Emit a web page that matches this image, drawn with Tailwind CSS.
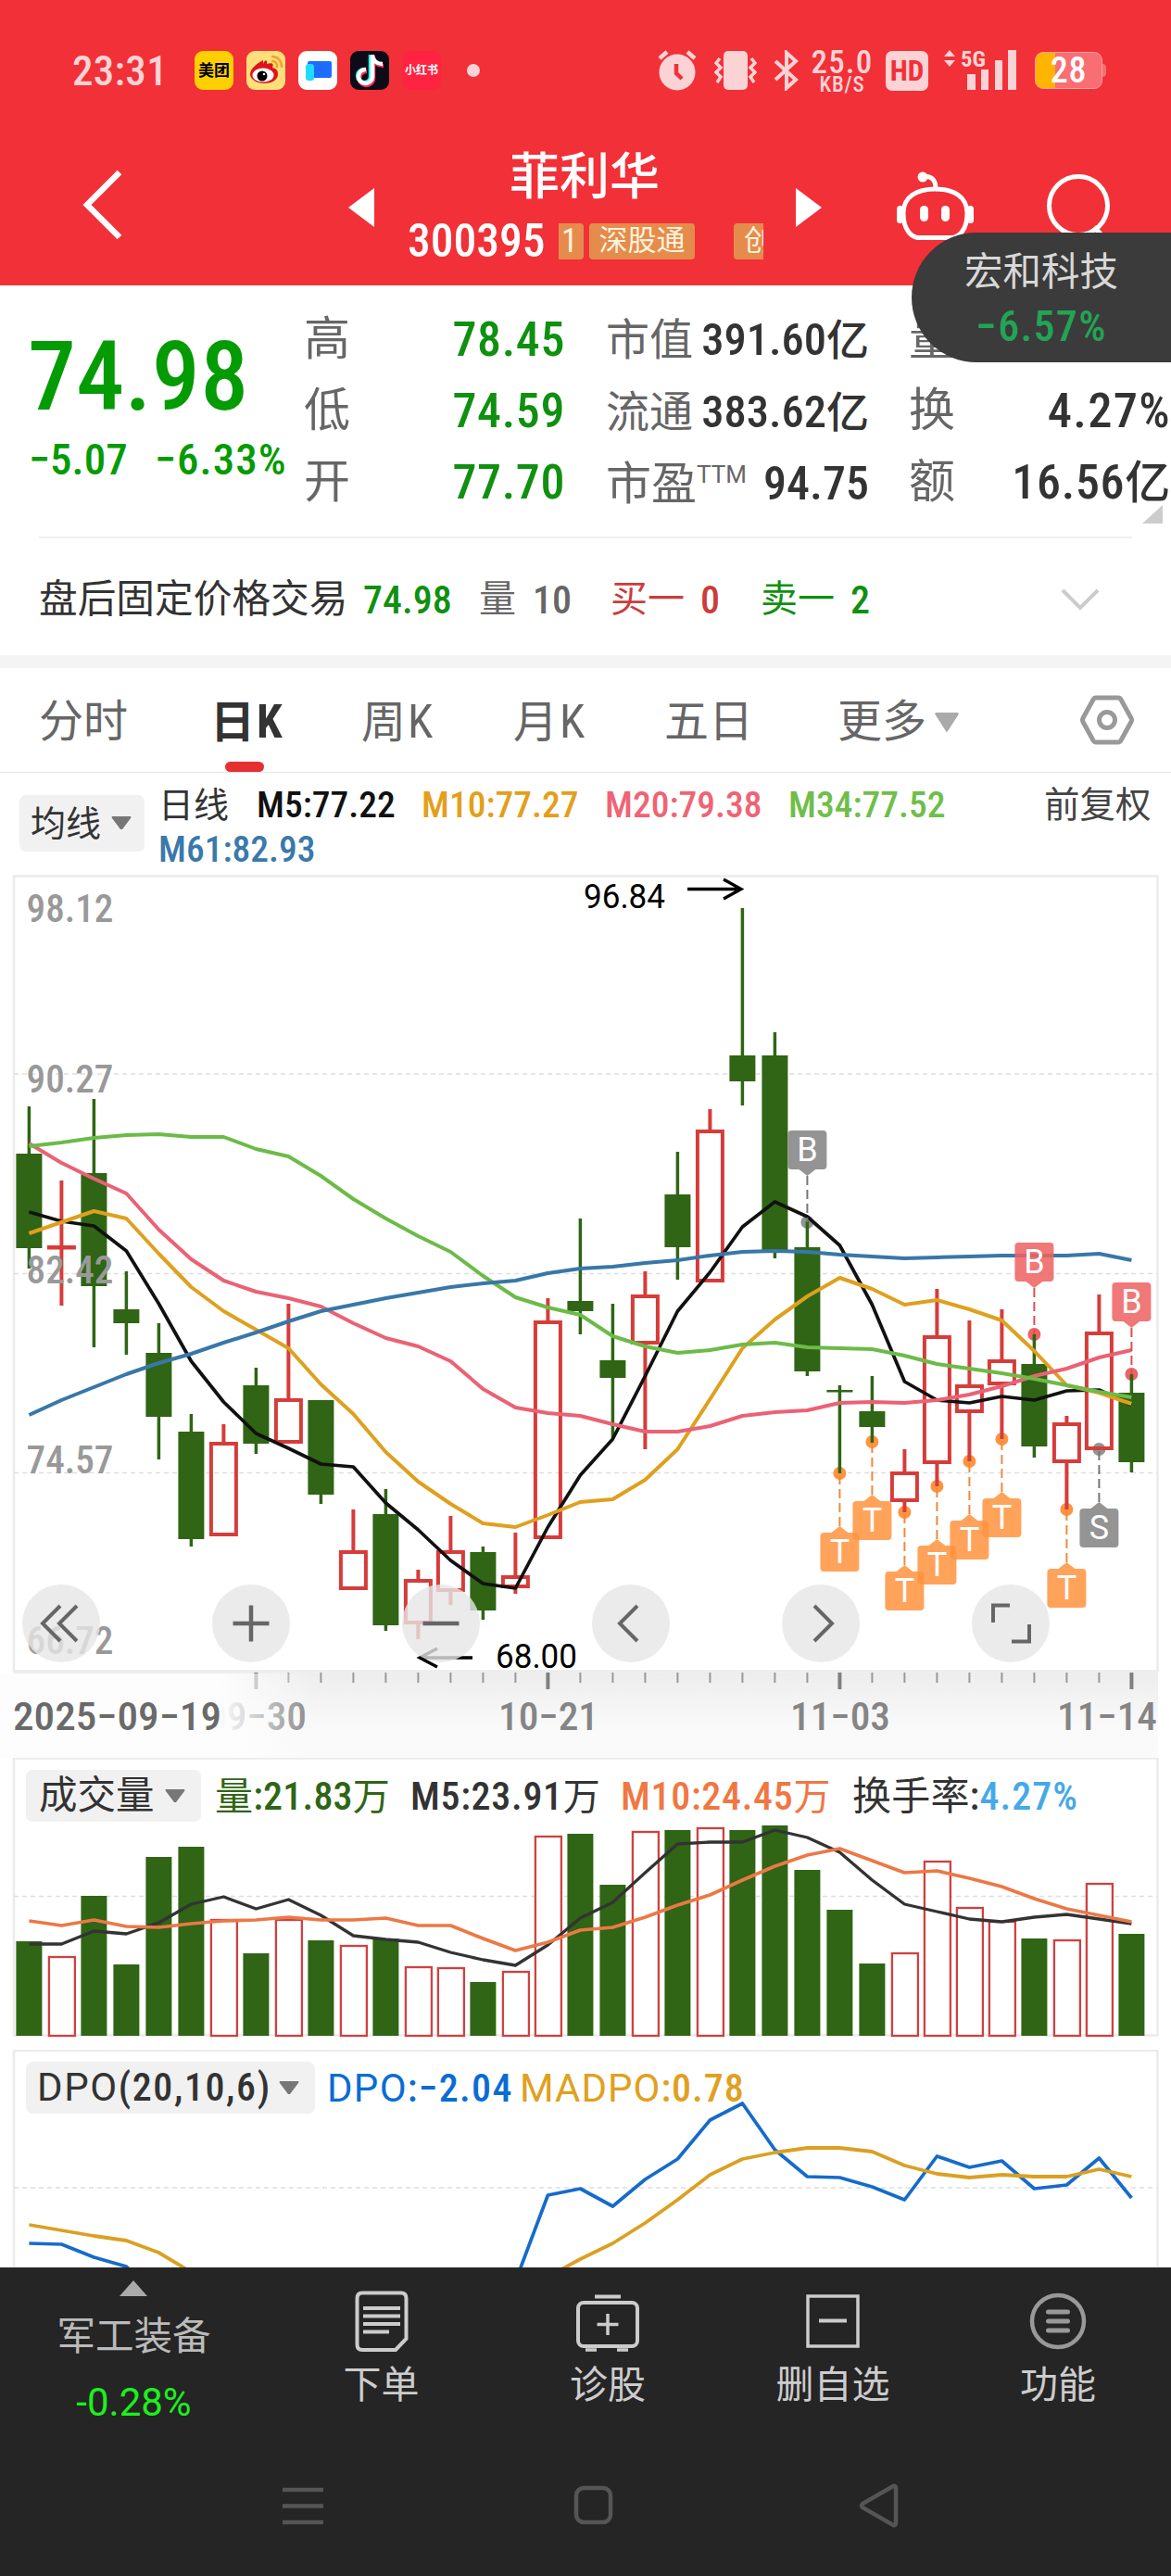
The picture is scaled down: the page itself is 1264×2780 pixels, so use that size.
<!DOCTYPE html>
<html lang="zh-CN">
<head>
<meta charset="utf-8">
<title>菲利华 300395</title>
<script src="https://cdn.jsdelivr.net/npm/@tailwindcss/browser@4"></script>
</head>
<body class="relative h-[2780px] w-[1264px] overflow-hidden bg-white font-['Roboto_Condensed','Roboto','Noto_Sans_CJK_SC',sans-serif] whitespace-nowrap text-[#333]">

<!-- header -->
<header class="h-[308px] bg-[#f13038] text-white">
  <div class="flex h-[152px] items-center">
    <div class="ml-[78px] w-[132px] text-[45px] leading-none font-medium tracking-[0.300px] text-[#fcd3d5]">23:31</div>
    <div class="flex gap-[14px]">
      <div class="flex size-[42px] items-center justify-center rounded-[9px] bg-[#ffd000] text-[17px] leading-none font-bold text-black">美团</div>
      <svg class="size-[42px]" viewBox="0 0 42 42"><rect width="42" height="42" rx="9" fill="#ffdf7a"/><path d="M18 14c2-6 5-4 4 0 6-2 8 0 6 4 5 1 6 4 6 7 0 7-8 10-15 10S4 31 4 25 12 13 18 10z" fill="#e1131a"/><ellipse cx="18" cy="26" rx="11.500" ry="7.500" fill="#fff"/><circle cx="17" cy="27" r="5.500" fill="#000"/><circle cx="19" cy="25" r="1.300" fill="#fff"/><path d="M28 11c3 0 5 2 5 6M28 6c6 0 10 5 10 11" fill="none" stroke="#f5a12d" stroke-width="2.500" stroke-linecap="round"/></svg>
      <svg class="size-[42px]" viewBox="0 0 42 42"><rect width="42" height="42" rx="9" fill="#fff"/><rect x="10" y="11" width="26" height="18" rx="2" fill="#1e6bff"/><rect x="8" y="14" width="9" height="18" rx="3" fill="#1fdcff"/></svg>
      <svg class="size-[42px]" viewBox="0 0 42 42"><rect width="42" height="42" rx="9" fill="#0d0b17"/><g fill="none" stroke-width="4.500"><path d="M23 4v24a7 7 0 1 1-7-8" stroke="#25f4ee" transform="translate(-1 0)"/><path d="M24 6v23a7.500 7.500 0 1 1-7-8M24 6c1 6 5 9 11 9" stroke="#fe2c55" transform="translate(1 1)"/><path d="M24 4v24a7.500 7.500 0 1 1-7-8M24 5c1 6 5 9 11 9" stroke="#fff"/></g></svg>
      <div class="flex size-[42px] items-center justify-center rounded-[9px] bg-[#ff2342] text-[12px] leading-none font-bold text-white">小红书</div>
    </div>
    <div class="ml-[28px] size-[14px] rounded-full bg-[#fcd3d5]"></div>
    <svg class="ml-[192px] h-[44px] w-[42px]" viewBox="0 0 42 44"><circle cx="21" cy="24" r="19.500" fill="#fcd3d5"/><path d="M2 9l8-7M40 9l-8-7" stroke="#fcd3d5" stroke-width="4.500"/><path d="M20 15v10l6 6" fill="none" stroke="#f13038" stroke-width="4.500"/></svg>
    <svg class="ml-[19px] h-[44px] w-[46px]" viewBox="0 0 46 44"><rect x="10" y="1" width="26" height="42" rx="5" fill="#fcd3d5"/><path d="M6 9L2 14l5 5-5 5 5 5-4 6M40 9l4 5-5 5 5 5-5 5 4 6" fill="none" stroke="#fcd3d5" stroke-width="3.500"/></svg>
    <svg class="ml-[18px] h-[44px] w-[28px]" viewBox="0 0 28 44"><path d="M2 12l22 20-10 9V3l10 9L2 32" fill="none" stroke="#fcd3d5" stroke-width="4"/></svg>
    <div class="ml-[11px] mt-[4px] flex w-[70px] flex-col items-center text-[#fcd3d5]">
      <div class="text-[35px] leading-[27px] font-medium tracking-[1.200px]">25.0</div>
      <div class="text-[23px] leading-[22px] font-medium tracking-[0.800px]">KB/S</div>
    </div>
    <div class="ml-[12px] flex h-[43px] w-[46px] items-center justify-center rounded-[7px] bg-[#fcd3d5] text-[31px] leading-none font-bold text-[#f13038]">HD</div>
    <svg class="ml-[16px] h-[44px] w-[80px]" viewBox="0 0 80 44"><g fill="#fcd3d5"><path d="M1 7l6-7 6 7zM1 11h12l-6 7z"/><rect x="26" y="26" width="9" height="17"/><rect x="41" y="21" width="8" height="22"/><rect x="56" y="11" width="8" height="32"/><rect x="70" y="0" width="9" height="43"/><text x="19" y="18" font-size="24" font-weight="700" textLength="27" lengthAdjust="spacingAndGlyphs">5G</text></g></svg>
    <div class="ml-[19px] flex items-center">
      <div class="flex h-[40px] w-[73px] items-center justify-center rounded-[9px] border border-[#ffa0a2] bg-linear-to-r from-[#ffb400] from-30% to-[#f86e73] to-30% text-[38px] leading-none font-medium tracking-[0.800px]">28</div>
      <div class="h-[14px] w-[4px] rounded-r bg-[#f86e73]"></div>
    </div>
  </div>
  <div class="flex h-[156px]">
    <svg class="mt-[28px] ml-[86px] h-[82px] w-[50px]" viewBox="0 0 50 82"><path d="M43 6L8 41l35 35" fill="none" stroke="#fff" stroke-width="6.500"/></svg>
    <svg class="mt-[51px] ml-[240px] h-[42px] w-[28px]" viewBox="0 0 28 42"><path d="M28 0v42L0 21z" fill="#fff"/></svg>
    <div class="ml-[36px] w-[384px]">
      <div class="mt-px -mb-px ml-[110px] text-[54px] leading-[78px] font-medium">菲利华</div>
      <div class="flex h-[60px] items-center">
        <div class="w-[163px] text-[49.500px] leading-[60px] font-medium">300395</div>
        <div class="flex h-[39px] w-[27px] items-center rounded-r-[4px] bg-[#e58c4c] text-[36px] text-[#fff3dc]"><span class="ml-[3px]">1</span></div>
        <div class="ml-[6px] flex h-[39px] w-[114px] items-center justify-center rounded-[4px] bg-[#e58c4c] text-[31px] text-[#fff3dc]">深股通</div>
        <div class="ml-[42px] flex h-[39px] w-[32px] items-center overflow-hidden rounded-l-[4px] bg-[#e58c4c] pl-[11px] text-[31px] text-[#fff3dc]">创</div>
      </div>
    </div>
    <svg class="mt-[51px] ml-[35px] h-[42px] w-[28px]" viewBox="0 0 28 42"><path d="M0 0v42L28 21z" fill="#fff"/></svg>
    <svg class="mt-[32px] ml-[80px] h-[78px] w-[84px]" viewBox="0 0 84 78"><g fill="none" stroke="#fff" stroke-width="5"><path d="M29 7c9-2 14 3 14 12"/><path d="M42.500 20C62 20 77 28 77 46S68 72.500 60 72.500H25C17 72.500 8 64 8 46S23 20 42.500 20z"/></g><rect x="1" y="38" width="7" height="19" rx="3.500" fill="#fff"/><rect x="77" y="38" width="7" height="19" rx="3.500" fill="#fff"/><circle cx="29" cy="7" r="5.500" fill="#fff"/><rect x="26" y="38" width="9" height="17" rx="4.500" fill="#fff"/><rect x="49" y="38" width="9" height="17" rx="4.500" fill="#fff"/></svg>
    <svg class="mt-[34px] ml-[76px] h-[80px] w-[76px]" viewBox="0 0 76 80"><path d="M54 59l16 17" stroke="#fff" stroke-width="5"/><circle cx="37" cy="36" r="31.500" fill="none" stroke="#fff" stroke-width="5"/></svg>
  </div>
</header>

<!-- quote summary -->
<section class="relative flex h-[271px] pt-[20px] pl-[31px]">
  <div class="w-[297px] font-medium text-[#049b04]">
    <div class="mt-[29px] -ml-px text-[104px] leading-[100px] tracking-[0.300px]">74.98</div>
    <div class="mt-[14px] flex text-[47px] leading-[50px]"><span class="w-[136px]">−5.07</span><span class="tracking-[1px]">−6.33%</span></div>
  </div>
  <div class="w-[282px] leading-[77px]">
    <div class="flex justify-between"><span class="text-[50px] text-[#666]">高</span><span class="text-[52px] font-medium tracking-[0.600px] text-[#109010]">78.45</span></div>
    <div class="flex justify-between"><span class="text-[50px] text-[#666]">低</span><span class="text-[52px] font-medium tracking-[0.600px] text-[#109010]">74.59</span></div>
    <div class="flex justify-between"><span class="text-[50px] text-[#666]">开</span><span class="text-[52px] font-medium tracking-[0.600px] text-[#109010]">77.70</span></div>
  </div>
  <div class="ml-[44px] w-[284px] leading-[77px]">
    <div class="flex justify-between"><span class="text-[47px] text-[#666]">市值</span><span class="text-[48.500px] font-medium">391.60<span class="text-[46px]">亿</span></span></div>
    <div class="flex justify-between"><span class="text-[47px] text-[#666]">流通</span><span class="text-[48.500px] font-medium">383.62<span class="text-[46px]">亿</span></span></div>
    <div class="flex justify-between"><span class="flex text-[49px] text-[#666]">市盈<span class="-mt-[10px] font-['Roboto'] text-[26px]">TTM</span></span><span class="text-[50px] font-medium">94.75</span></div>
  </div>
  <div class="ml-[43px] w-[283px] leading-[77px]">
    <div class="text-[50px] text-[#666]">量</div>
    <div class="flex justify-between"><span class="text-[50px] text-[#666]">换</span><span class="text-[52.500px] font-medium tracking-[1.300px]">4.27%</span></div>
    <div class="flex justify-between"><span class="text-[50px] text-[#666]">额</span><span class="text-[52px] font-medium tracking-[0.700px]">16.56<span class="text-[49px]">亿</span></span></div>
  </div>
  <svg class="absolute top-[237px] left-[1233px] h-[20px] w-[22px]" viewBox="0 0 22 20"><path d="M22 0v20H0z" fill="#ccc"/></svg>
</section>

<!-- after-hours trading -->
<section class="flex h-[128px] flex-col">
  <div class="mx-[42px] h-[2px] bg-[#eee]"></div>
  <div class="flex flex-1 items-center pt-[6px] pl-[42px] text-[42px]">
    <span class="w-[350px] text-[41.700px]">盘后固定价格交易</span>
    <span class="w-[125px] font-medium text-[#109010]">74.98</span>
    <span class="w-[58px] text-[40px] text-[#666]">量</span><span class="w-[84px] font-medium text-[#666]">10</span>
    <span class="w-[97px] text-[40px] text-[#cb3c3a]">买一</span><span class="w-[65px] font-medium text-[#cb3c3a]">0</span>
    <span class="w-[97px] text-[40px] text-[#109010]">卖一</span><span class="font-medium text-[#109010]">2</span>
    <svg class="ml-[205px] h-[26px] w-[44px]" viewBox="0 0 44 26"><path d="M3 3l19 19L41 3" fill="none" stroke="#ccc" stroke-width="4"/></svg>
  </div>
</section>
<div class="h-[14px] bg-[#f4f4f4]"></div>

<!-- period tabs -->
<nav class="flex h-[113px] items-center border-b border-[#e5e5e5] pt-[4px] pl-[42px] text-[48px] leading-[60px] text-[#666]">
  <span class="w-[185px]">分时</span>
  <span class="relative w-[163px] font-bold text-[#333]">日<span class="ml-[2px] text-[50px]">K</span><i class="absolute top-[73px] left-[16px] h-[11px] w-[42px] rounded-[6px] bg-[#e62f31]"></i></span>
  <span class="w-[164px]">周<span class="ml-[2px] text-[50px]">K</span></span>
  <span class="w-[163px]">月<span class="ml-[2px] text-[50px]">K</span></span>
  <span class="w-[187px]">五日</span>
  <span>更多</span>
  <svg class="ml-[9px] h-[21px] w-[26px]" viewBox="0 0 26 21"><path d="M2 0h22q3 0 1 3L14 20q-1 2-2 0L1 3Q-1 0 2 0z" fill="#aaa"/></svg>
  <svg class="ml-[131px] -mt-[4px] h-[54px] w-[58px]" viewBox="0 0 58 54"><path d="M17 3h24q2 0 3 2l11 20q1 2 0 4L44 49q-1 2-3 2H17q-2 0-3-2L3 29q-1-2 0-4L14 5q1-2 3-2z" fill="none" stroke="#999" stroke-width="5"/><circle cx="29" cy="27" r="8.500" fill="none" stroke="#999" stroke-width="5"/></svg>
</nav>

<!-- moving-average legend -->
<section class="flex h-[106px] pl-[21px]">
  <div class="mt-[24px] flex h-[61px] w-[135px] items-center rounded-[7px] bg-[#f1f1f1] pl-[12px] text-[38px] leading-none"><span>均线</span>
    <svg class="ml-[11px] h-[15px] w-[22px]" viewBox="0 0 22 15"><path d="M1 0h20q1 1 0 2L12 14h-2L1 2Q0 1 1 0z" fill="#777"/></svg></div>
  <div class="mt-[11px] ml-[15px] text-[39.500px] leading-[48px] font-medium">
    <div class="flex"><span class="w-[106px] text-[38px] font-normal">日线</span><span class="w-[178px] text-[#111]">M5:77.22</span><span class="w-[198px] text-[#e39f1c]">M10:77.27</span><span class="w-[198px] text-[#ee6475]">M20:79.38</span><span class="w-[276px] text-[#6fbe4a]">M34:77.52</span><span class="text-[38.500px] font-normal text-[#444]">前复权</span></div>
    <div class="text-[#3a79ab]">M61:82.93</div>
  </div>
</section>

<!-- candlestick chart with time axis -->
<section class="relative h-[957px]">
  <svg id="kline" class="block h-[957px] w-[1264px]" viewBox="0 940 1264 957"></svg>
  <div class="absolute top-[770px] left-[24px] flex gap-[121px]">
    <button class="size-[84px] rounded-full bg-[#e6e6e6]/80"><svg viewBox="0 0 84 84"><path d="M41 23L22 42l19 19M59 23L40 42l19 19" fill="none" stroke="#666" stroke-width="4"/></svg></button>
    <button class="size-[84px] rounded-full bg-[#e6e6e6]/80"><svg viewBox="0 0 84 84"><path d="M42 22.500v39M22.500 42h39" fill="none" stroke="#666" stroke-width="4.500"/></svg></button>
    <button class="size-[84px] rounded-full bg-[#e6e6e6]/80"><svg viewBox="0 0 84 84"><path d="M22.500 42h39" fill="none" stroke="#666" stroke-width="4.500"/></svg></button>
    <button class="size-[84px] rounded-full bg-[#e6e6e6]/80"><svg viewBox="0 0 84 84"><path d="M49 23L30 42l19 19" fill="none" stroke="#666" stroke-width="4"/></svg></button>
    <button class="size-[84px] rounded-full bg-[#e6e6e6]/80"><svg viewBox="0 0 84 84"><path d="M35 23l19 19-19 19" fill="none" stroke="#666" stroke-width="4"/></svg></button>
    <button class="size-[84px] rounded-full bg-[#e6e6e6]/80"><svg viewBox="0 0 84 84"><path d="M41 22.500H23V41M43 61.500h19V43" fill="none" stroke="#666" stroke-width="4"/></svg></button>
  </div>
</section>

<!-- volume -->
<section class="relative h-[315px]">
  <svg id="volume" class="absolute inset-0 h-[315px] w-[1264px]" viewBox="0 1897 1264 315"></svg>
  <div class="relative flex pt-[14px] pl-[28px] text-[42px] leading-[56px] font-medium tracking-[0.200px]">
    <div class="-mt-px flex h-[56px] w-[189px] items-center rounded-[7px] bg-[#f1f1f1] pl-[14px] text-[41.500px] font-normal tracking-normal">成交量<svg class="ml-[11px] h-[15px] w-[22px]" viewBox="0 0 22 15"><path d="M1 0h20q1 1 0 2L12 14h-2L1 2Q0 1 1 0z" fill="#777"/></svg></div>
    <span class="ml-[15px] w-[211px] text-[#2f6514]"><span class="text-[41px] font-normal">量</span>:21.83<span class="text-[40px] font-normal">万</span></span>
    <span class="w-[227px] tracking-[0.700px]">M5:23.91<span class="text-[40px] font-normal">万</span></span>
    <span class="w-[249px] tracking-[0.700px] text-[#f07742]">M10:24.45<span class="text-[40px] font-normal">万</span></span>
    <span><span class="ml-px text-[42px] font-normal">换手率</span>:<span class="tracking-[1px] text-[#45a9e8]">4.27%</span></span>
  </div>
</section>

<!-- DPO -->
<section class="relative h-[235px]">
  <svg id="dpo" class="absolute inset-0 h-[235px] w-[1264px]" viewBox="0 2212 1264 235"></svg>
  <div class="relative flex pt-[14px] pl-[28px] text-[42px] leading-[56px] font-medium">
    <div class="-mt-px flex h-[56px] w-[312px] items-center rounded-[7px] bg-[#f1f1f1] pl-[12px]"><span class="w-[261px] tracking-[1.600px]"><span class="font-['Roboto'] font-normal">DPO</span>(20,10,6)</span><svg class="h-[15px] w-[22px]" viewBox="0 0 22 15"><path d="M1 0h20q1 1 0 2L12 14h-2L1 2Q0 1 1 0z" fill="#777"/></svg></div>
    <span class="ml-[13px] w-[208px] tracking-[1.300px] text-[#0b6cd4]"><span class="font-['Roboto'] font-normal">DPO</span>:−2.04</span>
    <span class="tracking-[1px] text-[#e0a020]"><span class="font-['Roboto'] font-normal">MADPO</span>:0.78</span>
  </div>
</section>

<!-- bottom toolbar and system navigation -->
<footer class="h-[333px] bg-[#252525] text-[#ccc]">
  <div class="grid h-[180px] grid-cols-[289px_245px_244px_242px_244px] justify-items-center text-[41px] leading-[50px]">
    <div class="flex flex-col items-center">
      <svg class="mt-[14px] h-[17px] w-[30px]" viewBox="0 0 30 17"><path d="M15 0l15 17H0z" fill="#aaa"/></svg>
      <div class="mt-[19px] text-[41.500px] text-[#bbb]">军工装备</div>
      <div class="mt-[21px] font-['Roboto'] text-[42px] text-[#1df01d]">-0.28%</div>
    </div>
    <div class="flex flex-col items-center">
      <svg class="mt-[25px] h-[67px] w-[58px]" viewBox="0 0 58 67"><path d="M8 2.500h42q5.500 0 5.500 6V52L44 64H8q-5.500 0-5.500-6V8.500q0-6 5.500-6z" fill="none" stroke="#ccc" stroke-width="4"/><path d="M9 19h40M9 27.500h40M9 36h40M9 44.500h28" stroke="#ccc" stroke-width="4"/></svg>
      <div class="mt-[10px]">下单</div>
    </div>
    <div class="flex flex-col items-center">
      <svg class="mt-[29px] h-[62px] w-[68px]" viewBox="0 0 68 62"><path d="M20 2.500h28" stroke="#ccc" stroke-width="4"/><rect x="2" y="9" width="64" height="47" rx="6" fill="none" stroke="#ccc" stroke-width="4"/><path d="M10 60h12M44 60h12M34 21v23M22.500 32.500h23" stroke="#ccc" stroke-width="3.500"/></svg>
      <div class="mt-[11px]">诊股</div>
    </div>
    <div class="flex flex-col items-center">
      <svg class="mt-[29px] h-[58px] w-[58px]" viewBox="0 0 58 58"><rect x="2" y="2" width="54" height="54" fill="none" stroke="#ccc" stroke-width="3.500"/><path d="M14 28.500h30" stroke="#ccc" stroke-width="4"/></svg>
      <div class="mt-[15px]">删自选</div>
    </div>
    <div class="flex flex-col items-center">
      <svg class="mt-[27px] h-[62px] w-[62px]" viewBox="0 0 62 62"><circle cx="31" cy="31" r="28" fill="none" stroke="#999" stroke-width="4.500"/><path d="M20.500 21h21M20.500 31h21M20.500 41h21" stroke="#999" stroke-width="5" stroke-linecap="round"/></svg>
      <div class="mt-[13px]">功能</div>
    </div>
  </div>
  <div class="flex h-[153px] items-start pt-[52px]">
    <svg class="ml-[305px] h-[50px] w-[44px]" viewBox="0 0 44 50"><path d="M0 8h44M0 25.500h44M0 43h44" stroke="#555" stroke-width="4.500"/></svg>
    <svg class="ml-[269px] h-[50px] w-[46px]" viewBox="0 0 46 50"><rect x="4" y="6" width="37" height="37" rx="8" fill="none" stroke="#555" stroke-width="4.500"/></svg>
    <svg class="ml-[263px] h-[50px] w-[46px]" viewBox="0 0 46 50"><path d="M4 23q-2 2 0 4l33 19q3 1 3-2V6q0-3-3-2z" fill="none" stroke="#555" stroke-width="4.500"/></svg>
  </div>
</footer>

<!-- floating stock ticker -->
<aside class="absolute top-[251px] right-0 flex h-[140px] w-[280px] flex-col items-center rounded-l-[70px] bg-[#3b3b3b] pt-[13px]">
  <div class="text-[41.500px] leading-[60px] text-[#d8d8d8]">宏和科技</div>
  <div class="text-[46px] leading-[56px] font-medium tracking-[1.300px] text-[#22a455]">−6.57%</div>
</aside>

<script>
const GREEN = '#2f6514', RED = '#d63c3a';
const X = i => 31.4 + 35 * i;
const line = (ys, color, start = 0, w = 4) =>
  `<polyline fill="none" stroke="${color}" stroke-width="${w}" stroke-linejoin="round" points="${ys.map((y, k) => X(k + start) + ',' + y).join(' ')}"/>`;
const dash = y => `<path d="M15 ${y}H1249" stroke="#dedede" stroke-width="1.500" stroke-dasharray="5 4"/>`;
const label = (x, y, t, fill, extra = '') => `<text x="${x}" y="${y}" fill="${fill}" ${extra}>${t}</text>`;

// direction, high, body top, body bottom, low
const candles = [
 ['g',1194,1245,1347,1369],['r',1274,1344,1348,1409],['g',1186,1266,1388,1454],['g',1372,1413,1428,1462],['g',1428,1460,1529,1575],
 ['g',1526,1545,1661,1669],['r',1537,1556,1658,1658],['g',1476,1495,1558,1569],['r',1407,1509,1558,1558],['g',1511,1511,1613,1623],
 ['r',1629,1673,1716,1716],['g',1607,1634,1754,1760],['r',1694,1704,1753,1769],['r',1636,1673,1718,1732],['g',1669,1675,1738,1748],
 ['r',1654,1700,1714,1720],['r',1401,1425,1661,1661],['g',1315,1404,1415,1440],['g',1407,1468,1487,1552],['r',1372,1397,1451,1564],
 ['g',1243,1289,1346,1381],['r',1197,1219,1384,1384],['g',980,1139,1167,1193],['g',1114,1139,1350,1358],['g',1318,1346,1480,1485],
 ['g',1495,1500,1502.500,1590],['g',1485,1523,1540,1557],['r',1564,1588,1621,1632],['r',1391,1441,1580,1604],['r',1425,1494,1525,1577],
 ['r',1413,1467,1495,1553],['g',1440,1472,1561,1573],['r',1528,1535,1579,1629],['r',1397,1437,1565,1565],['g',1483,1503,1578,1589]];
const M5 = [1308,1318,1323,1350,1407,1469,1513,1547,1563,1580,1583,1622,1651,1684,1709,1714,1648,1592,1553,1485,1415,1373,1324,1297,1313,1344,1408,1491,1511,1514,1507,1511,1501,1500,1516];
const M10 = [1331,1319,1307,1315,1353,1389,1415,1435,1455,1494,1526,1567,1599,1623,1644,1648,1635,1621,1618,1597,1564,1510,1455,1424,1399,1379,1391,1408,1403,1413,1425,1458,1495,1503,1515];
const M20 = [1234,1255,1272,1288,1327,1359,1382,1394,1401,1410,1428,1444,1453,1469,1499,1519,1525,1528,1537,1545,1545,1539,1528,1524,1522,1514,1513,1514,1511,1505,1496,1485,1477,1465,1457];
const M34 = [1237,1233,1228,1225,1224,1227,1227,1240,1248,1269,1294,1315,1334,1351,1377,1400,1411,1419,1442,1453,1460,1457,1451,1449,1454,1455,1456,1463,1472,1477,1482,1488,1495,1502,1508];
const M61 = [1527,1511,1497,1483,1471,1461,1449,1438,1426,1415,1408,1401,1395,1389,1385,1382,1374,1369,1367,1363,1360,1355,1351,1350,1351,1354,1356,1358,1357,1356,1355,1355,1355,1353,1360];

let s = `<defs>
 <linearGradient id="axis" x1="0" y1="0" x2="0" y2="1"><stop offset="0" stop-color="#ededed"/><stop offset=".6" stop-color="#f9f9f9"/><stop offset="1" stop-color="#fafafa"/></linearGradient>
 <linearGradient id="fade" x1="236" x2="340" y1="0" y2="0" gradientUnits="userSpaceOnUse"><stop offset="0" stop-color="#fdfdfd"/><stop offset=".4" stop-color="#fdfdfd" stop-opacity=".6"/><stop offset="1" stop-color="#fdfdfd" stop-opacity="0"/></linearGradient></defs>`;
s += `<rect x="15" y="1805" width="1235" height="92" fill="url(#axis)"/>`;
s += `<rect x="15" y="945.500" width="1234.500" height="858" fill="#fff" stroke="#ebebeb" stroke-width="2.500"/>`;
s += [1159, 1374.500, 1589.500].map(dash).join('');

// trade markers: index, anchor y, letter, colour, badge above (-1) or below (1)
const markers = [[24,1319,'B','#949494',-1],[31,1440,'B','#ed6262',-1],[34,1483,'B','#ed6262',-1],
 [25,1590,'T','#ff9440',1],[26,1556,'T','#ff9440',1],[27,1632,'T','#ff9440',1],[28,1604,'T','#ff9440',1],[29,1577,'T','#ff9440',1],[30,1553,'T','#ff9440',1],[32,1629,'T','#ff9440',1],[33,1564,'S','#949494',1]];
s += markers.map(([i, y, , c]) => `<ellipse cx="${X(i)}" cy="${y}" rx="7" ry="7" fill="${c}"/>`).join('');

candles.forEach(([d, hi, t, b, lo], i) => {
  const x = X(i), c = d === 'g' ? GREEN : RED;
  if (d === 'g') s += `<path d="M${x} ${hi}V${lo}" stroke="${c}" stroke-width="3.500"/><rect x="${x - 14}" y="${t}" width="28" height="${b - t}" fill="${c}"/>`;
  else s += `<path d="M${x} ${hi}V${t}M${x} ${b}V${lo}" stroke="${c}" stroke-width="4"/><rect x="${x - 13.5}" y="${t + 2}" width="27" height="${Math.max(b - t - 4, 0.5)}" fill="none" stroke="${c}" stroke-width="4"/>`;
});
s += line(M5, '#111', 0, 3.7) + line(M10, '#dfa01f') + line(M20, '#ea6274') + line(M34, '#6cbb48') + line(M61, '#3877a8');

markers.forEach(([i, y, ch, c, dir]) => {
  const x = X(i), top = dir < 0 ? y - 99 : y + 64, tip = dir < 0 ? top + 49 : top - 7, edge = dir < 0 ? top + 42 : top;
  const gray = c === '#949494';
  const dark = ch === 'T' ? '#f08a3a' : gray ? '#777' : '#dc5050';
  s += `<path d="M${x} ${tip}V${y}" stroke="${dark}" stroke-width="2" stroke-dasharray="10 5"/>
   <g fill="${c}" fill-opacity="${gray ? 1 : 0.86}"><path d="M${x - 9} ${edge}h18L${x} ${tip}z"/><rect x="${x - 21}" y="${top}" width="42" height="42" rx="4"/></g>
   <text x="${x}" y="${top + 33}" font-size="36" font-family="Roboto" fill="#fff" text-anchor="middle">${ch}</text>`;
});

const price = 'font-size="42" font-weight="500" textLength="94" lengthAdjust="spacingAndGlyphs"';
s += [['98.12',995],['90.27',1179],['82.42',1384.5],['74.57',1590],['66.72',1785]].map(([t, y]) => label(28.5, y, t, '#999', price)).join('');
const tip = 'font-size="36" font-family="Roboto" textLength="88" lengthAdjust="spacingAndGlyphs"';
s += label(630, 980, '96.84', '#000', tip) + label(535, 1800, '68.00', '#000', tip);
s += `<path d="M742 959.500H800M781 949L800 959.500L781 970M510 1789H453M472 1779L453 1789L472 1799" fill="none" stroke="#000" stroke-width="3.300"/>`;

for (let i = 7; i < 35; i++) {
  const major = (i - 7) % 9 === 0;
  s += `<path d="M${X(i)} 1805V${major ? 1823 : 1816}" stroke="${major ? '#808080' : '#999'}" stroke-width="${major ? 4 : 2}"/>`;
}
const date = 'font-size="42" font-weight="500" textLength="108" lengthAdjust="spacingAndGlyphs"';
s += label(223, 1867, '09−30', '#858585', date) + label(538, 1867, '10−21', '#858585', date) + label(853, 1867, '11−03', '#858585', date) + label(1141, 1867, '11−14', '#858585', date);
s += `<rect x="0" y="1806" width="340" height="91" fill="url(#fade)"/>`;
s += label(14, 1867, '2025−09−19', '#6a6a6a', 'font-size="42" font-weight="500" textLength="225" lengthAdjust="spacingAndGlyphs"');
document.getElementById('kline').innerHTML = s;

// volume: direction, bar top
const vol = 'g2095 r2111 g2046 g2120 g2004 g1993 r2071 g2108 r2071 g2094 r2099 g2092 r2122 r2123 g2139 r2127 r1981 g1979 g2034 r1976 g1975 r1972 g1975 g1970 g2018 g2061 g2119 r2107 r2008 r2058 r2073 g2092 r2093 r2032 g2087'.split(' ');
const V5 = [2098,2098,2084,2087,2075,2055,2047,2060,2050,2067,2089,2093,2096,2107,2115,2121,2099,2070,2053,2021,1990,1988,1988,1975,1983,1999,2029,2055,2063,2071,2074,2069,2066,2071,2076];
const V10 = [2073,2078,2072,2079,2080,2076,2073,2072,2069,2072,2072,2070,2078,2078,2092,2105,2096,2083,2080,2069,2056,2045,2029,2014,2002,1995,2008,2021,2019,2027,2036,2049,2060,2067,2074];
let v = `<rect x="15" y="1897.500" width="1234.500" height="299" fill="none" stroke="#ebebeb" stroke-width="2.500"/>` + dash(2046.5);
vol.forEach((e, i) => {
  const y = +e.slice(1), x = X(i);
  v += e[0] === 'g' ? `<rect x="${x - 14}" y="${y}" width="28" height="${2197 - y}" fill="${GREEN}"/>`
    : `<rect x="${x - 13.5}" y="${y + 1}" width="28" height="${2196 - y}" fill="#fff" stroke="#cf4140" stroke-width="2.300"/>`;
});
v += line(V5, '#333', 0, 3.3) + line(V10, '#ec7846', 0, 3.7);
document.getElementById('volume').innerHTML = v;

const DPO = [2421,2422,2436,2446,2480], DPO2 = [2462,2369,2362,2381,2352,2330,2288,2270,2320,2349,2350,2360,2374,2327,2339,2332,2362,2358,2329,2372];
const MAD = [2401,2407,2413,2418,2431,2452,2475], MAD2 = [2457,2438,2421,2399,2374,2347,2330,2323,2318,2318,2322,2337,2346,2350,2347,2349,2349,2341,2349];
document.getElementById('dpo').innerHTML = `<path d="M15 2447V2213H1249.500V2447" fill="none" stroke="#ebebeb" stroke-width="2.500"/>` + dash(2361)
  + line(DPO, '#156bcb', 0, 3.7) + line(DPO2, '#156bcb', 15, 3.7) + line(MAD, '#dba022', 0, 3.8) + line(MAD2, '#dba022', 16, 3.8);
</script>
</body>
</html>
